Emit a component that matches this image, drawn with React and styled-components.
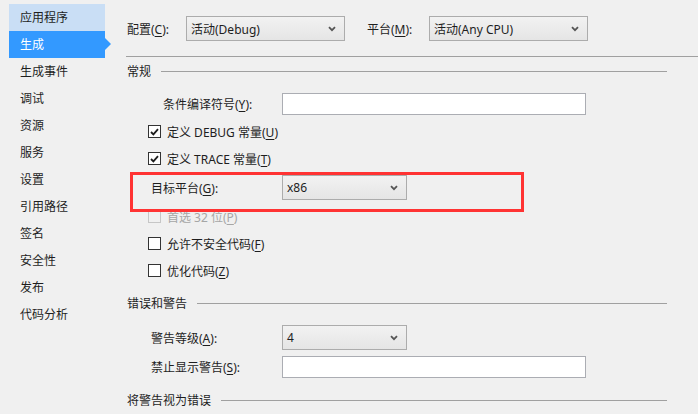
import styled, { createGlobalStyle } from "styled-components";

const GlobalStyle = createGlobalStyle`
    html, body {
        margin: 0;
        padding: 0;
        background: #f0f0f0;
    }
    body {
        font-family: "Segoe UI", "Noto Sans", "Noto Sans CJK SC", sans-serif;
        font-size: 12px;
        color: #1e1e1e;
    }
`;

const Page = styled.div`
    width: 698px;
    height: 414px;
    display: flex;
    overflow: hidden;
    background: #f0f0f0;
`;

const Sidebar = styled.div`
    width: 96px;
    margin-left: 9px;
    padding-top: 4px;
    display: flex;
    flex-direction: column;
    flex-shrink: 0;
`;

const NavItem = styled.div`
    position: relative;
    height: 27px;
    line-height: 28px;
    padding-left: 11px;
    background: ${p => p.$active ? "#3399ff" : p.$hover ? "#c9def5" : "transparent"};
    color: ${p => p.$active ? "#ffffff" : "#1e1e1e"};
    &::after {
        content: "";
        display: ${p => p.$active ? "block" : "none"};
        position: absolute;
        right: -6px;
        top: 7px;
        border-top: 6px solid transparent;
        border-bottom: 6px solid transparent;
        border-left: 6px solid #3399ff;
    }
`;

const Main = styled.div`
    flex: 1;
    padding-left: 22px;
    display: flex;
    flex-direction: column;
`;

const TopBar = styled.div`
    display: flex;
    align-items: center;
    margin-top: 16px;
    height: 25px;
`;

const Label = styled.span`
    width: ${p => p.$w}px;
    flex-shrink: 0;
    white-space: nowrap;
    color: ${p => p.$disabled ? "#a6a6a6" : "#1e1e1e"};
`;

const U = styled.span`
    text-decoration: underline;
    text-underline-offset: 2px;
`;

const SelectBox = styled.div`
    width: ${p => p.$w}px;
    height: 25px;
    box-sizing: border-box;
    border: 1px solid #acacac;
    background: linear-gradient(#f2f2f2, #e5e5e5);
    display: flex;
    align-items: center;
    justify-content: space-between;
    padding: 0 8px 0 4px;
    margin-left: ${p => p.$ml || 0}px;
    flex-shrink: 0;
`;

const TextBox = styled.div`
    width: 304px;
    height: 22px;
    box-sizing: border-box;
    border: 1px solid #abadb3;
    background: #ffffff;
`;

const Divider = styled.div`
    margin-top: 15px;
    margin-left: -1px;
    border-top: 1px solid #a0a0a0;
`;

const Group = styled.div`
    display: flex;
    flex-direction: column;
    padding-right: 31px;
`;

const GroupHeader = styled.div`
    display: flex;
    align-items: center;
    height: 16px;
    margin-top: ${p => p.$mt}px;
    &::after {
        content: "";
        flex: 1;
        border-top: 1px solid #a0a0a0;
        margin-left: 10px;
    }
`;

const Row = styled.div`
    position: relative;
    display: flex;
    align-items: center;
    height: ${p => p.$h}px;
    margin-top: ${p => p.$mt || 0}px;
    padding-left: ${p => p.$indent}px;
`;

const CheckRow = styled.div`
    display: flex;
    align-items: center;
    height: 27px;
    padding-left: 21px;
    color: ${p => p.$disabled ? "#a6a6a6" : "#1e1e1e"};
`;

const Box = styled.span`
    width: 13px;
    height: 13px;
    box-sizing: border-box;
    border: 1px solid ${p => p.$disabled ? "#c6c6c6" : "#333333"};
    background: ${p => p.$disabled ? "#f0f0f0" : "#ffffff"};
    margin-right: 6px;
    display: flex;
    align-items: center;
    justify-content: center;
    flex-shrink: 0;
`;

const Highlight = styled.div`
    position: absolute;
    left: 3px;
    top: 0;
    width: 394px;
    height: 40px;
    box-sizing: border-box;
    border: 3px solid #ff3333;
    pointer-events: none;
    z-index: 2;
`;

const Chevron = () => (
    <svg width="8" height="6" viewBox="0 0 8 6">
        <path d="M1 1.2 L4 4.2 L7 1.2" fill="none" stroke="#555" strokeWidth="1.8" />
    </svg>
);

const Select = ({ w, ml, children }) => (
    <SelectBox $w={w} $ml={ml}>
        <span>{children}</span>
        <Chevron />
    </SelectBox>
);

const Check = ({ checked, disabled, children }) => (
    <CheckRow $disabled={disabled}>
        <Box $disabled={disabled}>
            {checked && (
                <svg width="9" height="8" viewBox="0 0 9 8">
                    <path d="M1 4 L3.4 6.4 L8 1.2" fill="none" stroke="#1e1e1e" strokeWidth="1.8" />
                </svg>
            )}
        </Box>
        <span>{children}</span>
    </CheckRow>
);

const navItems = ["应用程序", "生成", "生成事件", "调试", "资源", "服务", "设置", "引用路径", "签名", "安全性", "发布", "代码分析"];

export default function App() {
    return (
        <Page>
            <GlobalStyle />
            <Sidebar>
                {navItems.map((n, i) => (
                    <NavItem key={n} $hover={i === 0} $active={i === 1}>{n}</NavItem>
                ))}
            </Sidebar>
            <Main>
                <TopBar>
                    <Label $w={59}>配置(<U>C</U>):</Label>
                    <Select w={159}>活动(Debug)</Select>
                    <Label $w={62} style={{ marginLeft: 22 }}>平台(<U>M</U>):</Label>
                    <Select w={159}>活动(Any CPU)</Select>
                </TopBar>
                <Divider />
                <Group>
                    <GroupHeader $mt={6}>常规</GroupHeader>
                    <Row $h={22} $mt={14} $indent={36}>
                        <Label $w={119}>条件编译符号(<U>Y</U>):</Label>
                        <TextBox />
                    </Row>
                    <div style={{ marginTop: 3 }} />
                    <Check checked>定义 DEBUG 常量(<U>U</U>)</Check>
                    <Check checked>定义 TRACE 常量(<U>T</U>)</Check>
                    <Row $h={31} $indent={24}>
                        <Highlight />
                        <Label $w={131}>目标平台(<U>G</U>):</Label>
                        <Select w={125}>x86</Select>
                    </Row>
                    <Check disabled>首选 32 位(<U>P</U>)</Check>
                    <Check>允许不安全代码(<U>F</U>)</Check>
                    <Check>优化代码(<U>Z</U>)</Check>
                    <GroupHeader $mt={11}>错误和警告</GroupHeader>
                    <Row $h={25} $mt={14} $indent={24}>
                        <Label $w={131}>警告等级(<U>A</U>):</Label>
                        <Select w={125}>4</Select>
                    </Row>
                    <Row $h={22} $mt={6} $indent={24}>
                        <Label $w={131}>禁止显示警告(<U>S</U>):</Label>
                        <TextBox />
                    </Row>
                    <GroupHeader $mt={14}>将警告视为错误</GroupHeader>
                </Group>
            </Main>
        </Page>
    );
}
